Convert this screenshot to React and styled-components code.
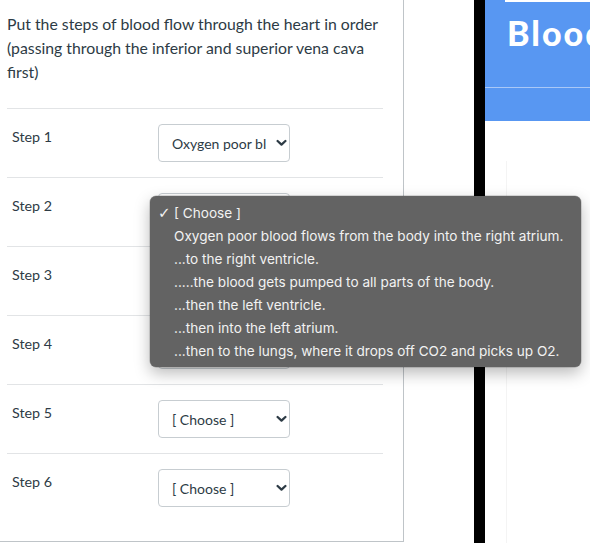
import React from "react";
import styled, { createGlobalStyle } from "styled-components";

const Global = createGlobalStyle`
  html, body { margin: 0; padding: 0; background: #fff; overflow: hidden; }
  body { font-family: Lato, "Open Sans", sans-serif; }
`;

const Page = styled.div`
  display: flex;
  width: 590px;
  height: 543px;
  position: relative;
  background: #fff;
`;

const QuizPanel = styled.div`
  box-sizing: border-box;
  width: 404px;
  height: 542px;
  border-right: 1px solid #bfc4c8;
  border-bottom: 1px solid #bfc4c8;
  padding: 12px 20px 0 7px;
  flex-shrink: 0;
`;

const Question = styled.p`
  margin: 0 -8px 24px 0;
  font-family: Lato, sans-serif;
  font-size: 15.8px;
  line-height: 24px;
  color: #2d3b45;
`;

const Row = styled.div`
  display: flex;
  align-items: flex-start;
  box-sizing: border-box;
  height: 69px;
  border-top: 1px solid #e2e4e6;
  padding-top: 15px;
`;

const Label = styled.div`
  width: 146px;
  padding-left: 5px;
  margin-top: 3px;
  font-size: 14.3px;
  line-height: 20px;
  color: #2d3b45;
`;

const SelectBox = styled.div`
  box-sizing: border-box;
  width: 132px;
  height: 38px;
  border: 1px solid #c7cdd1;
  border-radius: 4px;
  background: #fff;
  display: flex;
  align-items: center;
  padding: 0 0 0 13px;
  font-size: 14px;
  color: #2d3b45;
`;

const SelectValue = styled.span`
  width: 94px;
  white-space: nowrap;
  overflow: hidden;
`;

const ChevronWrap = styled.span`
  display: flex;
  margin-left: 10px;
`;

const Chevron = () => (
  <ChevronWrap>
    <svg width="11" height="8" viewBox="0 0 11 8">
      <path d="M1.6 2 L5.5 5.6 L9.4 2" fill="none" stroke="#2d3b45" strokeWidth="2.3" strokeLinecap="round" strokeLinejoin="round" />
    </svg>
  </ChevronWrap>
);

const Spacer = styled.div`
  width: 70px;
  flex-shrink: 0;
`;

const Divider = styled.div`
  width: 11px;
  flex-shrink: 0;
  background: #000;
`;

const RightPane = styled.div`
  flex: 1;
  display: flex;
  flex-direction: column;
  overflow: hidden;
`;

const Banner = styled.div`
  height: 121px;
  background: #5897f2;
  display: flex;
  flex-direction: column;
`;

const TopStripe = styled.div`
  height: 2px;
  margin-left: 20px;
  background: #fff;
`;

const Title = styled.div`
  height: 85px;
  box-sizing: border-box;
  padding: 11px 0 0 22px;
  font-family: Lato, sans-serif;
  font-weight: 900;
  font-size: 34px;
  line-height: 40px;
  color: #fff;
  white-space: nowrap;
  letter-spacing: 2px;
`;

const BannerRule = styled.div`
  height: 1px;
  background: #a9c8f7;
`;

const Content = styled.div`
  flex: 1;
  margin: 40px 0 0 21px;
  border-left: 1px solid #f4f4f4;
`;

const Menu = styled.div`
  position: absolute;
  left: 150px;
  top: 196px;
  width: 431px;
  box-sizing: border-box;
  padding: 6px 0 4px 0;
  background: #636363;
  border-radius: 6px;
  box-shadow: 0 6px 16px rgba(0, 0, 0, 0.28), 0 0 0 0.5px rgba(0,0,0,0.25);
  font-family: Inter, "Open Sans", sans-serif;
  font-size: 13.6px;
  color: #f2f2f2;
`;

const MenuItem = styled.div`
  position: relative;
  height: 23px;
  line-height: 23px;
  padding-left: 24px;
  white-space: nowrap;
`;

const Check = styled.span`
  position: absolute;
  left: 8px;
  top: 0;
  font-family: "DejaVu Sans", sans-serif;
  font-weight: bold;
  font-size: 15px;
`;

const steps = ["Step 1", "Step 2", "Step 3", "Step 4", "Step 5", "Step 6"];
const values = ["Oxygen poor blood flows from the body into the right atrium.", "[ Choose ]", "[ Choose ]", "[ Choose ]", "[ Choose ]", "[ Choose ]"];
const options = [
  "[ Choose ]",
  "Oxygen poor blood flows from the body into the right atrium.",
  "...to the right ventricle.",
  ".....the blood gets pumped to all parts of the body.",
  "...then the left ventricle.",
  "...then into the left atrium.",
  "...then to the lungs, where it drops off CO2 and picks up O2.",
];

export default function App() {
  return (
    <>
      <Global />
      <Page>
        <QuizPanel>
          <Question>
            Put the steps of blood flow through the heart in order (passing through the inferior and superior vena cava first)
          </Question>
          {steps.map((s, i) => (
            <Row key={s}>
              <Label>{s}</Label>
              <SelectBox>
                <SelectValue>{values[i]}</SelectValue>
                <Chevron />
              </SelectBox>
            </Row>
          ))}
        </QuizPanel>
        <Spacer />
        <Divider />
        <RightPane>
          <Banner>
            <TopStripe />
            <Title>Blood Flow</Title>
            <BannerRule />
          </Banner>
          <Content />
        </RightPane>
        <Menu>
          {options.map((o, i) => (
            <MenuItem key={i}>
              {i === 0 && <Check>✓</Check>}
              {o}
            </MenuItem>
          ))}
        </Menu>
      </Page>
    </>
  );
}
